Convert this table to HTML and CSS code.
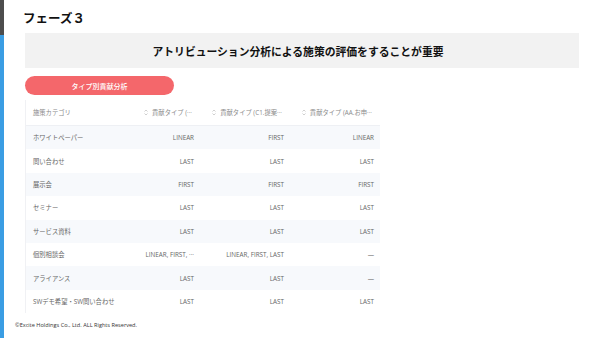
FILE: index.html
```html
<!DOCTYPE html>
<html lang="ja">
<head>
<meta charset="utf-8">
<link rel="stylesheet" href="styles.css">
</head>
<body>
<div class="page">
  <div class="side"><div class="side-top"></div><div class="side-bottom"></div></div>
  <main class="main">
    <h1 class="phase">フェーズ３</h1>
    <div class="banner">アトリビューション分析による施策の評価をすることが重要</div>
    <div class="pill">タイプ別貢献分析</div>
    <div class="table">
      <div class="row head">
        <div class="cell cat">施策カテゴリ</div>
        <div class="cell num"><svg class="sort" viewBox="0 0 4 7" width="4" height="7"><path d="M0.5 2.5 L2 1 L3.5 2.5 M0.5 4.5 L2 6 L3.5 4.5" fill="none" stroke="#bbb" stroke-width="0.7"/></svg>貢献タイプ (···</div>
        <div class="cell num"><svg class="sort" viewBox="0 0 4 7" width="4" height="7"><path d="M0.5 2.5 L2 1 L3.5 2.5 M0.5 4.5 L2 6 L3.5 4.5" fill="none" stroke="#bbb" stroke-width="0.7"/></svg>貢献タイプ (C1.提案···</div>
        <div class="cell num"><svg class="sort" viewBox="0 0 4 7" width="4" height="7"><path d="M0.5 2.5 L2 1 L3.5 2.5 M0.5 4.5 L2 6 L3.5 4.5" fill="none" stroke="#bbb" stroke-width="0.7"/></svg>貢献タイプ (AA.お申···</div>
      </div>
      <div class="row alt"><div class="cell cat">ホワイトペーパー</div><div class="cell num">LINEAR</div><div class="cell num">FIRST</div><div class="cell num">LINEAR</div></div>
      <div class="row"><div class="cell cat">問い合わせ</div><div class="cell num">LAST</div><div class="cell num">LAST</div><div class="cell num">LAST</div></div>
      <div class="row alt"><div class="cell cat">展示会</div><div class="cell num">FIRST</div><div class="cell num">FIRST</div><div class="cell num">FIRST</div></div>
      <div class="row"><div class="cell cat">セミナー</div><div class="cell num">LAST</div><div class="cell num">LAST</div><div class="cell num">LAST</div></div>
      <div class="row alt"><div class="cell cat">サービス資料</div><div class="cell num">LAST</div><div class="cell num">LAST</div><div class="cell num">LAST</div></div>
      <div class="row"><div class="cell cat">個別相談会</div><div class="cell num">LINEAR, FIRST, ···</div><div class="cell num">LINEAR, FIRST, LAST</div><div class="cell num">—</div></div>
      <div class="row alt"><div class="cell cat">アライアンス</div><div class="cell num">LAST</div><div class="cell num">LAST</div><div class="cell num">—</div></div>
      <div class="row"><div class="cell cat">SWデモ希望・SW問い合わせ</div><div class="cell num">LAST</div><div class="cell num">LAST</div><div class="cell num">LAST</div></div>
    </div>
    <footer class="footer">©Excite Holdings Co., Ltd. ALL Rights Reserved.</footer>
  </main>
</div>
</body>
</html>
```

FILE: styles.css
```css
* { box-sizing: border-box; }
html, body { margin: 0; padding: 0; background: #fff; }
body {
  font-family: "Noto Sans", "Noto Sans CJK JP", sans-serif;
  color: #222;
}
.page {
  display: flex;
  width: 600px;
  height: 338px;
  overflow: hidden;
}
.side {
  width: 4px;
  display: flex;
  flex-direction: column;
  flex-shrink: 0;
}
.side-top { height: 35px; background: #4d4d4d; }
.side-bottom { flex: 1; background: #3a9de3; }
.main {
  flex: 1;
  display: flex;
  flex-direction: column;
  padding-left: 21px;
}
.phase {
  margin: 0 0 0 -2px;
  height: 33px;
  display: flex;
  align-items: center;
  font-family: "Noto Sans CJK JP", sans-serif;
  font-size: 12.5px;
  font-weight: 700;
  color: #111;
  padding-top: 1px;
}
.banner {
  width: 554px;
  height: 35px;
  background: #f2f2f2;
  display: flex;
  align-items: center;
  justify-content: center;
  padding-right: 8px;
  font-family: "Noto Sans CJK JP", sans-serif;
  font-weight: 700;
  font-size: 10.8px;
  color: #111;
}
.pill {
  margin-top: 8px;
  width: 149px;
  height: 19px;
  border-radius: 10px;
  background: #f4676b;
  color: #fff;
  font-family: "Noto Sans CJK JP", sans-serif;
  font-size: 7px;
  font-weight: 500;
  display: flex;
  align-items: center;
  justify-content: center;
}
.table {
  margin-top: 5px;
  width: 355px;
  border-left: 1px solid #f0f1f4;
}
.row {
  display: grid;
  grid-template-columns: 85px 90px 90px 90px;
  height: 23.4px;
  align-items: center;
  font-size: 6.3px;
  color: #666;
  font-family: "Open Sans", "Noto Sans CJK JP", sans-serif;
}
.row.head {
  height: 26px;
  color: #8a8a8a;
  border-bottom: 1px solid #eef0f4;
}
.row.alt { background: #f7f9fc; }
.cell {
  white-space: nowrap;
}
.cat { padding-left: 7px; overflow: visible; }
.num {
  text-align: right;
  padding-right: 7px;
  overflow: hidden;
}
.head .num { padding-right: 9px; }
.sort {
  vertical-align: -1px;
  margin-right: 4px;
}
.footer {
  margin-top: 8px;
  margin-left: -10px;
  font-size: 5.6px;
  color: #333;
  font-family: "Open Sans", sans-serif;
}
```
